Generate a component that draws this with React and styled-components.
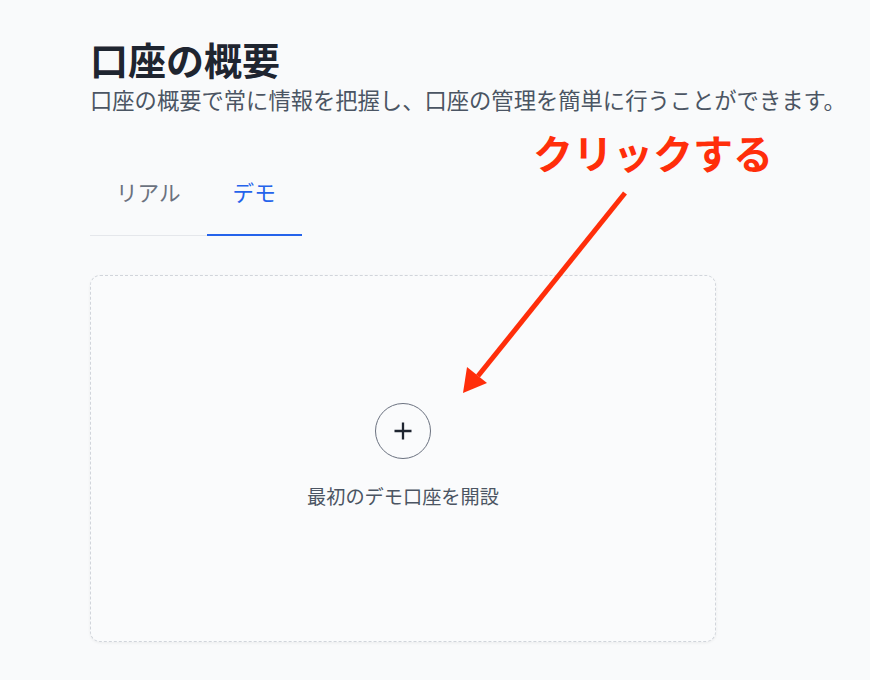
import React from "react";
import styled, { createGlobalStyle } from "styled-components";

const Global = createGlobalStyle`
  html, body { margin: 0; padding: 0; background: #f9fafb; }
  body { font-family: "Noto Sans CJK JP", "Noto Sans", sans-serif; }
  * { box-sizing: border-box; }
`;

const Page = styled.div`
  position: relative;
  width: 870px;
  height: 680px;
  padding: 36px 0 0 90px;
  overflow: hidden;
`;

const Title = styled.h1`
  margin: 0;
  font-size: 38px;
  line-height: 1.2;
  font-weight: 700;
  color: #1f2530;
`;

const Subtitle = styled.p`
  margin: 2px 0 0;
  font-size: 22.3px;
  line-height: 1.4;
  color: #4b5563;
  white-space: nowrap;
`;

const TabList = styled.div`
  display: inline-flex;
  margin-top: 52px;
  border-bottom: 1px solid #e5e7eb;
`;

const Tab = styled.button`
  border: none;
  background: none;
  padding: 10px 26px 27px;
  margin-bottom: -1px;
  font-family: inherit;
  font-size: 21.6px;
  line-height: 1.4;
  color: ${(p) => (p.$active ? "#2563eb" : "#6b7280")};
  border-bottom: 2px solid ${(p) => (p.$active ? "#2563eb" : "transparent")};
  cursor: pointer;
`;

const Card = styled.div`
  margin-top: 39px;
  width: 626px;
  height: 367px;
  border: 1px dashed #d1d5db;
  border-radius: 10px;
  background: #fafbfc;
  box-shadow: 0 1px 3px rgba(0, 0, 0, 0.06);
  display: flex;
  flex-direction: column;
  align-items: center;
  justify-content: center;
  gap: 24px;
`;

const AddCircle = styled.div`
  width: 56px;
  height: 56px;
  border-radius: 50%;
  border: 1px solid #6b7280;
  display: flex;
  align-items: center;
  justify-content: center;
  margin-top: -4px;
`;

const AddLabel = styled.div`
  font-size: 19.2px;
  line-height: 1.4;
  color: #4b5563;
`;

const Annotation = styled.div`
  position: absolute;
  left: 533px;
  top: 124px;
  font-size: 40px;
  line-height: 1.4;
  font-weight: 700;
  color: #ff2e0a;
  white-space: nowrap;
`;

const ArrowSvg = styled.svg`
  position: absolute;
  left: 0;
  top: 0;
  pointer-events: none;
`;

export default function App() {
  return (
    <>
      <Global />
      <Page>
        <Title>口座の概要</Title>
        <Subtitle>口座の概要で常に情報を把握し、口座の管理を簡単に行うことができます。</Subtitle>
        <TabList>
          <Tab>リアル</Tab>
          <Tab $active>デモ</Tab>
        </TabList>
        <Card>
          <AddCircle>
            <svg width="20" height="20" viewBox="0 0 20 20">
              <path d="M10 1.5v17M1.5 10h17" stroke="#1f2530" strokeWidth="2.3" strokeLinecap="butt" />
            </svg>
          </AddCircle>
          <AddLabel>最初のデモ口座を開設</AddLabel>
        </Card>
        <Annotation>クリックする</Annotation>
        <ArrowSvg width="870" height="680" viewBox="0 0 870 680">
          <line x1="625" y1="193" x2="478" y2="376" stroke="#ff2e0a" strokeWidth="5" />
          <polygon points="463,393 467,367 487,383" fill="#ff2e0a" />
        </ArrowSvg>
      </Page>
    </>
  );
}
